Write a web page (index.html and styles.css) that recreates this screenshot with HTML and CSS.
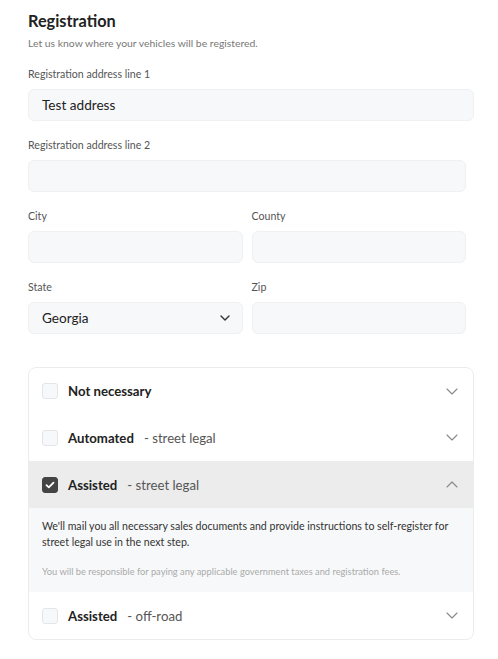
FILE: index.html
```html
<!DOCTYPE html>
<html>
<head>
<meta charset="utf-8">
<link rel="stylesheet" href="styles.css">
</head>
<body>
<div class="page">
  <h1 class="title">Registration</h1>
  <p class="subtitle">Let us know where your vehicles will be registered.</p>

  <div class="field">
    <div class="label">Registration address line 1</div>
    <div class="input wide">Test address</div>
  </div>
  <div class="field">
    <div class="label">Registration address line 2</div>
    <div class="input"></div>
  </div>
  <div class="row2">
    <div class="field">
      <div class="label">City</div>
      <div class="input"></div>
    </div>
    <div class="field">
      <div class="label">County</div>
      <div class="input"></div>
    </div>
  </div>
  <div class="row2">
    <div class="field">
      <div class="label">State</div>
      <div class="input select"><span>Georgia</span>
        <svg width="10" height="6" viewBox="0 0 10 6"><path d="M1 1l4 4 4-4" fill="none" stroke="#333" stroke-width="1.4" stroke-linecap="round" stroke-linejoin="round"/></svg>
      </div>
    </div>
    <div class="field">
      <div class="label">Zip</div>
      <div class="input"></div>
    </div>
  </div>

  <div class="card">
    <div class="item">
      <span class="box"></span>
      <span class="name">Not necessary</span>
      <svg class="chev" width="12" height="7" viewBox="0 0 12 7"><path d="M1 1l5 5 5-5" fill="none" stroke="#888" stroke-width="1.1" stroke-linecap="round" stroke-linejoin="round"/></svg>
    </div>
    <div class="item">
      <span class="box"></span>
      <span class="name">Automated</span><span class="sub">- street legal</span>
      <svg class="chev" width="12" height="7" viewBox="0 0 12 7"><path d="M1 1l5 5 5-5" fill="none" stroke="#888" stroke-width="1.1" stroke-linecap="round" stroke-linejoin="round"/></svg>
    </div>
    <div class="item active">
      <span class="box checked"><svg width="10" height="8" viewBox="0 0 10 8"><path d="M1.5 4.2l2.3 2.2L8.5 1.6" fill="none" stroke="#fff" stroke-width="1.8" stroke-linecap="round" stroke-linejoin="round"/></svg></span>
      <span class="name">Assisted</span><span class="sub">- street legal</span>
      <svg class="chev" width="12" height="7" viewBox="0 0 12 7"><path d="M1 6l5-5 5 5" fill="none" stroke="#888" stroke-width="1.1" stroke-linecap="round" stroke-linejoin="round"/></svg>
    </div>
    <div class="detail">
      <p class="desc">We'll mail you all necessary sales documents and provide instructions to self-register for street legal use in the next step.</p>
      <p class="note">You will be responsible for paying any applicable government taxes and registration fees.</p>
    </div>
    <div class="item">
      <span class="box"></span>
      <span class="name">Assisted</span><span class="sub">- off-road</span>
      <svg class="chev" width="12" height="7" viewBox="0 0 12 7"><path d="M1 1l5 5 5-5" fill="none" stroke="#888" stroke-width="1.1" stroke-linecap="round" stroke-linejoin="round"/></svg>
    </div>
  </div>
</div>
</body>
</html>
```

FILE: styles.css
```css
* { box-sizing: border-box; }
body {
  margin: 0;
  background: #fff;
  font-family: "Lato", "Noto Sans", sans-serif;
  color: #222;
}
.page {
  padding: 11px 0 0 28px;
  width: 466px;
}
.title {
  margin: 0;
  font-size: 16.3px;
  font-weight: 700;
  line-height: 20px;
  color: #222;
}
.subtitle {
  margin: 5px 0 0;
  font-size: 10.4px;
  line-height: 14px;
  color: #777;
}
.field {
  display: flex;
  flex-direction: column;
  gap: 8px;
  margin-top: 17px;
  flex: 1;
  min-width: 0;
}
.label {
  font-size: 10.6px;
  line-height: 14px;
  color: #555;
}
.input {
  height: 32px;
  background: #f7f8fa;
  border: 1px solid #eff0f2;
  border-radius: 6px;
  padding: 0 13px;
  display: flex;
  align-items: center;
  font-size: 13.6px;
  color: #222;
}
.input.wide { width: 446px; }
.select { justify-content: space-between; padding-right: 12px; }
.row2 {
  display: flex;
  gap: 9px;
}
.card {
  margin-top: 33px;
  width: 446px;
  border: 1px solid #ececec;
  border-radius: 8px;
  overflow: hidden;
}
.item {
  height: 47px;
  display: flex;
  align-items: center;
  padding: 0 13px;
  font-size: 13.2px;
}
.card > .item:first-child { height: 46px; }
.item.active { background: #ececec; }
.box {
  width: 16px;
  height: 16px;
  border: 1px solid #e3e5e8;
  background: #f7f8fa;
  border-radius: 3px;
  margin-right: 10px;
  display: flex;
  align-items: center;
  justify-content: center;
  flex: none;
}
.box.checked { background: #444; border-color: #444; }
.name { font-weight: 700; color: #222; }
.sub { color: #555; margin-left: 10px; }
.chev { margin-left: auto; margin-right: 2px; }
.detail {
  background: #f7f8f9;
  padding: 10px 13px 14px;
}
.desc {
  margin: 0;
  font-size: 10.6px;
  line-height: 16px;
  color: #333;
}
.note {
  margin: 16px 0 0;
  font-size: 9.3px;
  line-height: 12px;
  color: #aaa;
}
```
